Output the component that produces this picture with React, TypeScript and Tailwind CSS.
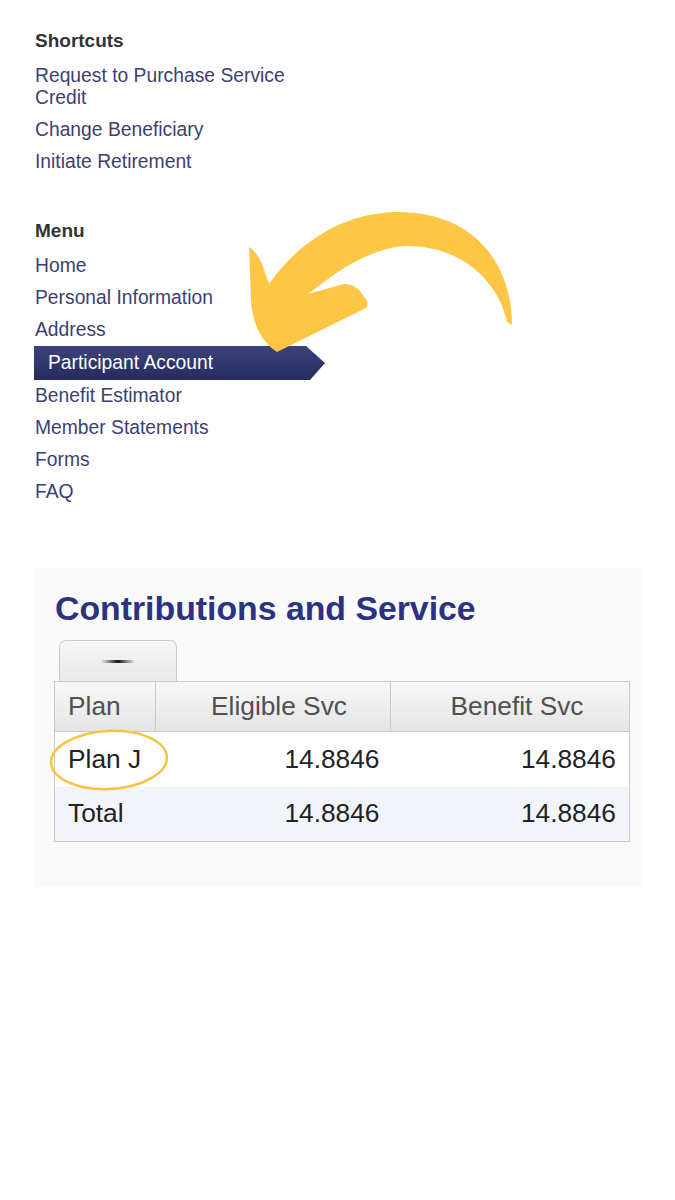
const shortcuts = ["Request to Purchase Service Credit", "Change Beneficiary", "Initiate Retirement"];
const menu = ["Home", "Personal Information", "Address", "Participant Account", "Benefit Estimator", "Member Statements", "Forms", "FAQ"];
const active = "Participant Account";

const rows = [
  { plan: "Plan J", eligible: "14.8846", benefit: "14.8846" },
  { plan: "Total", eligible: "14.8846", benefit: "14.8846" },
];

function Overlay() {
  return (
    <svg className="absolute left-0 top-0 pointer-events-none" width="675" height="1200" viewBox="0 0 675 1200">
      {/* curved arrow pointing at the active menu item */}
      <path
        d="M512 325 C512 270 480 212 397 212 C345 213 300 240 269 284 L262 264 Q257 252 249 247 L251 300 Q253 336 277 352 L366 308 Q370 303 364 297 Q357 284 344 284 L308 294 C325 282 360 250 405 246 C460 245 498 280 507 322 Z"
        fill="#fdc645"
      />
      {/* hand drawn circle around Plan J */}
      <ellipse cx="109" cy="760" rx="58" ry="29" fill="none" stroke="#f7c341" strokeWidth="2.5" transform="rotate(-3 109 760)" />
    </svg>
  );
}

export default function App() {
  return (
    <div className="relative w-[675px] min-h-[1200px] bg-white font-['Liberation_Sans',Arial,sans-serif]">
      <div className="pt-[30px] pl-[34px]">
        <nav className="w-[291px]">
          <h3 className="text-[19px] leading-[22px] font-bold text-[#333] pl-px">Shortcuts</h3>
          <ul className="mt-[8px] w-[271px]">
            {shortcuts.map((s) => (
              <li key={s} className="py-[5px] pl-px text-[19.3px] leading-[22px] text-[#3c3f70]">
                {s}
              </li>
            ))}
          </ul>

          <h3 className="mt-[42px] text-[19px] leading-[22px] font-bold text-[#333] pl-px">Menu</h3>
          <ul className="mt-[8px]">
            {menu.map((m) =>
              m === active ? (
                <li
                  key={m}
                  className="py-[6px] pl-[14px] text-[19.3px] leading-[22px] text-white bg-gradient-to-b from-[#3c4379] to-[#262b5f] [clip-path:polygon(0_0,272px_0,100%_50%,276px_100%,0_100%)]"
                >
                  {m}
                </li>
              ) : (
                <li key={m} className="py-[5px] pl-px text-[19.3px] leading-[22px] text-[#3c3f70]">
                  {m}
                </li>
              )
            )}
          </ul>
        </nav>
      </div>

      <section className="mt-[60px] ml-[34px] w-[607px] bg-[#fafafa] pt-[22px] pl-[20px] pr-[11px] pb-[45px]">
        <h2 className="text-[33.8px] leading-[36px] font-bold text-[#2b3282] pl-px">Contributions and Service</h2>

        <div className="mt-[14px] ml-[5px] w-[118px] h-[41px] rounded-t-[7px] border border-b-0 border-[#c9c9c9] bg-gradient-to-b from-[#f7f7f7] to-[#e9e9e9] flex items-center justify-center">
          <div className="w-[34px] h-[3px] rounded-full bg-gradient-to-r from-transparent via-[#111] to-transparent" />
        </div>

        <table className="w-[576px] border-collapse text-[26.3px]">
          <thead>
            <tr className="h-[50px] bg-gradient-to-b from-[#f8f8f8] to-[#e4e4e4]">
              <th className="w-[101px] border border-[#c9c9c9] pl-[13px] text-left font-normal text-[#505050]">Plan</th>
              <th className="w-[235px] border border-[#c9c9c9] pl-[12px] text-center font-normal text-[#505050]">Eligible Svc</th>
              <th className="border border-[#c9c9c9] pl-[14px] text-center font-normal text-[#505050]">Benefit Svc</th>
            </tr>
          </thead>
          <tbody className="border border-[#c9c9c9]">
            {rows.map((r, i) => (
              <tr key={r.plan} className={`h-[55px] ${i % 2 ? "bg-[#f1f5f9]" : "bg-white"}`}>
                <td className="pl-[13px] text-[#222]">{r.plan}</td>
                <td className="pr-[11px] text-right text-[#222]">{r.eligible}</td>
                <td className="pr-[13px] text-right text-[#222]">{r.benefit}</td>
              </tr>
            ))}
          </tbody>
        </table>
      </section>

      <Overlay />
    </div>
  );
}
